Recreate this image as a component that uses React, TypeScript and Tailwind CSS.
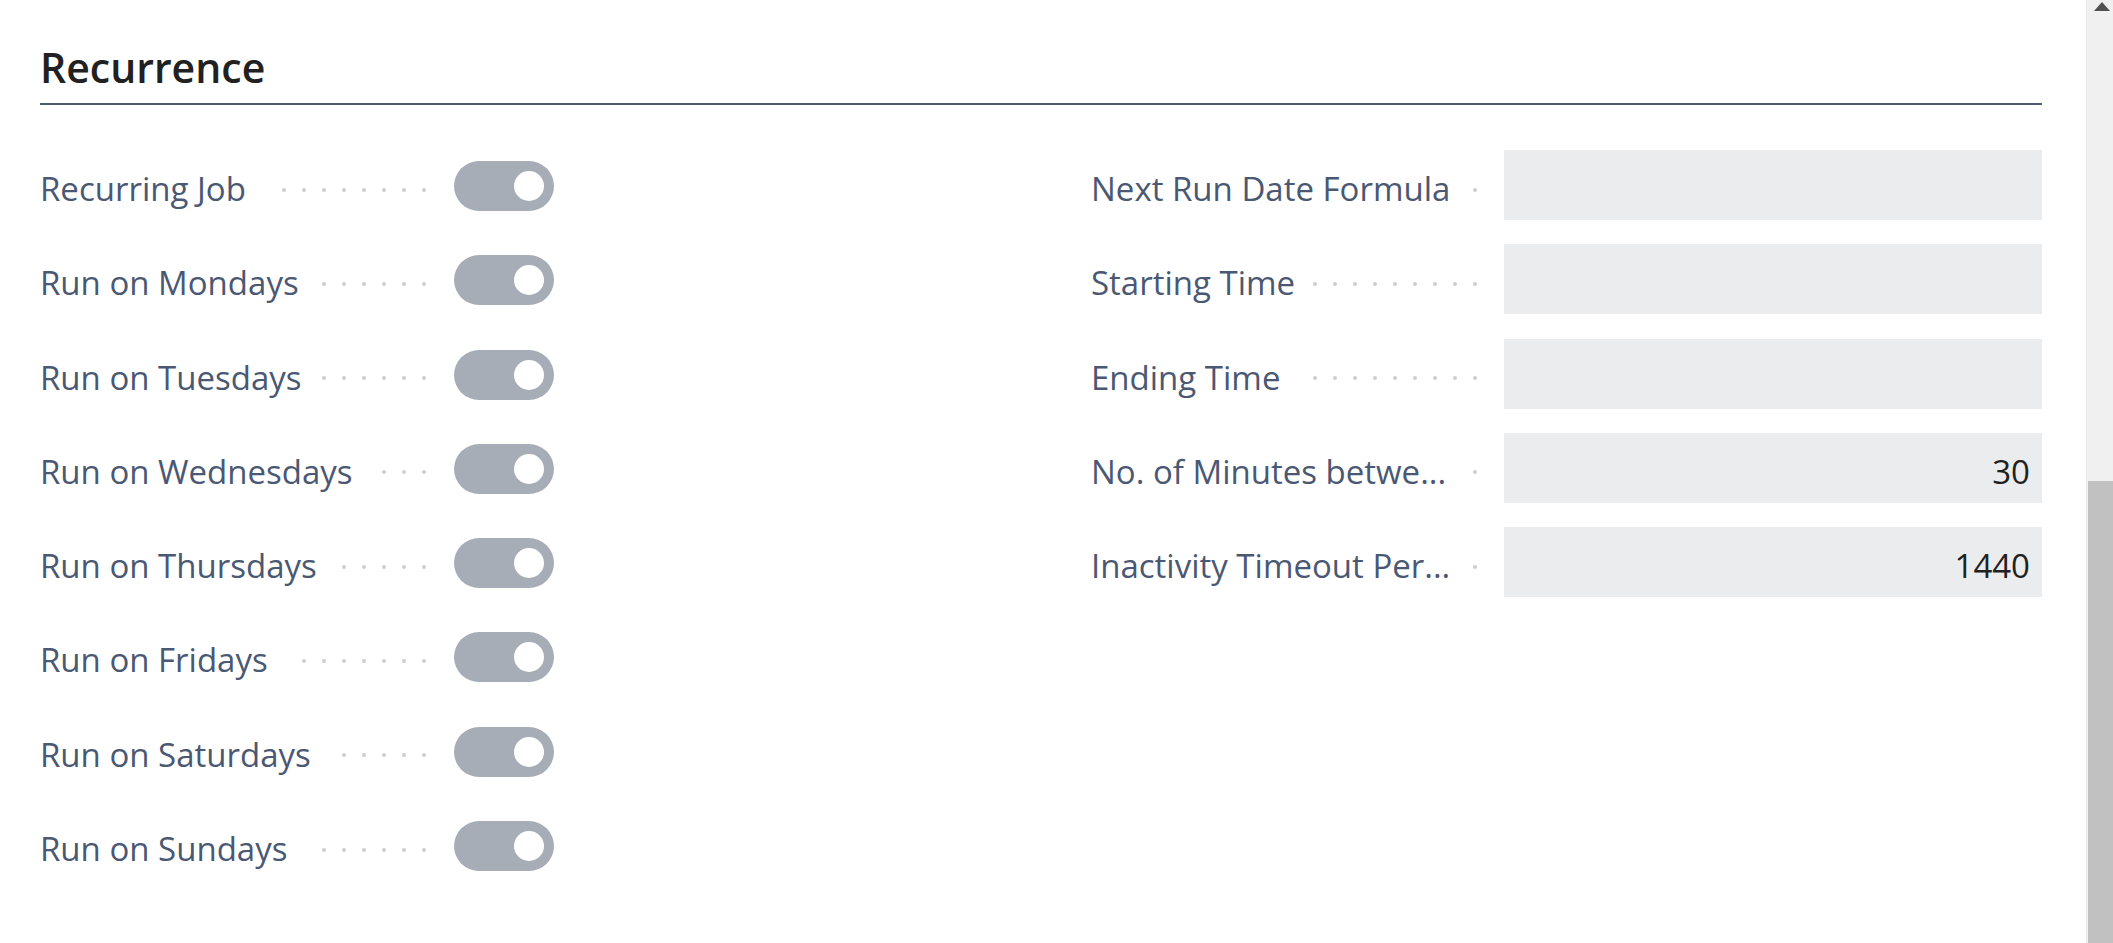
import React from "react";

const leftRows = [
  "Recurring Job",
  "Run on Mondays",
  "Run on Tuesdays",
  "Run on Wednesdays",
  "Run on Thursdays",
  "Run on Fridays",
  "Run on Saturdays",
  "Run on Sundays",
];

const rightRows: { label: string; value: string }[] = [
  { label: "Next Run Date Formula", value: "" },
  { label: "Starting Time", value: "" },
  { label: "Ending Time", value: "" },
  { label: "No. of Minutes betwe...", value: "30" },
  { label: "Inactivity Timeout Per...", value: "1440" },
];

function Leader() {
  return (
    <div className="flex flex-1 min-w-0 ml-[1px] flex-row-reverse flex-wrap h-[4px] overflow-hidden mt-[9px]">
      {Array.from({ length: 30 }).map((_, i) => (
        <div key={i} className="flex w-[20px] h-[4px] shrink-0 justify-end">
          <div className="w-[4px] h-[4px] rounded-full bg-[#cbced3]" />
        </div>
      ))}
    </div>
  );
}

function Label({ text }: { text: string }) {
  return (
    <div className="flex items-center w-[386px] shrink-0">
      <span className="block max-w-[362px] truncate whitespace-nowrap text-[33px] leading-[44px] pt-[8px] text-[#4a5873]">
        {text}
      </span>
      <Leader />
    </div>
  );
}

function Toggle() {
  return (
    <div className="flex items-center justify-end w-[100px] h-[50px] rounded-full bg-[#a7adb6] pr-[10px]">
      <div className="w-[30px] h-[30px] rounded-full bg-white" />
    </div>
  );
}

export default function App() {
  return (
    <div className="flex w-[2113px] h-[943px] overflow-hidden bg-white font-['Open_Sans',sans-serif]">
      <div className="flex-1 pl-[40px] pr-[44px] pt-[42px]">
        <div className="text-[41px] leading-[50px] font-semibold text-[#212121] pb-[11px] border-b-2 border-[#505c6d]">
          Recurrence
        </div>
        <div className="grid grid-cols-2 gap-x-[100px] mt-[45px]">
          <div className="flex flex-col gap-y-[24.3px]">
            {leftRows.map((l) => (
              <div key={l} className="flex items-center h-[70px]">
                <Label text={l} />
                <div className="ml-[28px] pt-[2px]">
                  <Toggle />
                </div>
              </div>
            ))}
          </div>
          <div className="flex flex-col gap-y-[24.3px]">
            {rightRows.map((r) => (
              <div key={r.label} className="flex items-center h-[70px]">
                <Label text={r.label} />
                <div className="ml-[27px] flex-1 h-[70px] bg-[#ebeced] flex items-center justify-end pr-[12px]">
                  <span className="text-[33px] leading-[44px] pt-[8px] text-[#212121]">{r.value}</span>
                </div>
              </div>
            ))}
          </div>
        </div>
      </div>
      <div className="flex flex-col w-[27px] h-[943px] bg-[#f0f0f0] border-l border-[#e8e8e8]">
        <div className="flex justify-center pt-[2px] pl-[3px] h-[14px]">
          <svg width="16" height="9" viewBox="0 0 16 9">
            <polygon points="8,0 16,9 0,9" fill="#505050" />
          </svg>
        </div>
        <div className="mt-auto ml-[1px] h-[462px] bg-[#c1c1c1]" />
      </div>
    </div>
  );
}
